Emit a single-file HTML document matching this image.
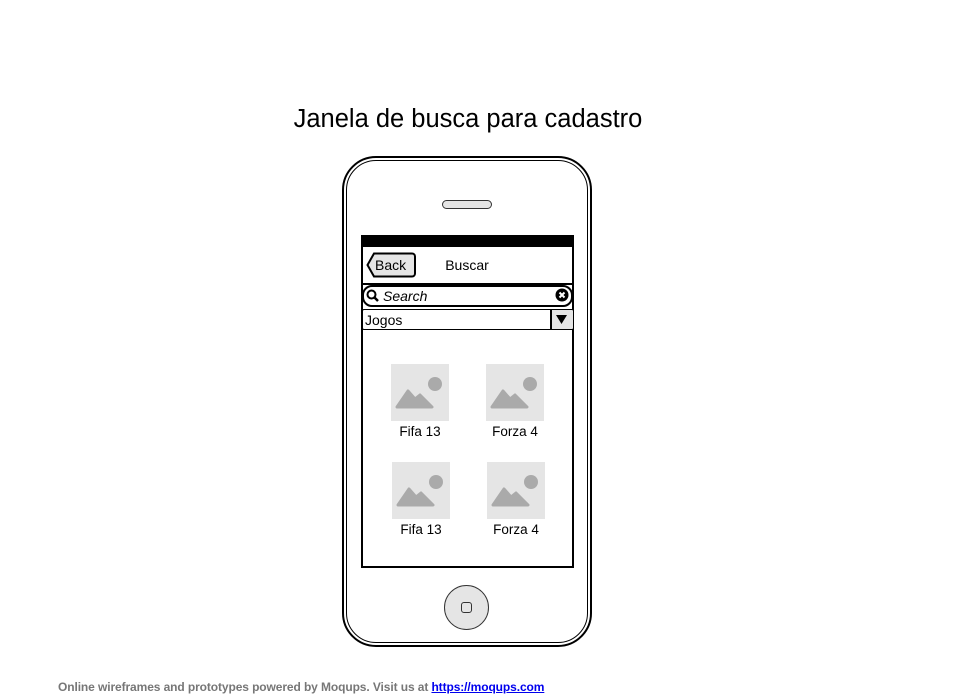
<!DOCTYPE html>
<html><head><meta charset="utf-8"><style>
body{margin:0;width:960px;height:700px;background:#fff;position:relative;font-family:"Liberation Sans",sans-serif;overflow:hidden}
.a{position:absolute}
.img{position:absolute;width:58px;height:57px;background:#e5e5e5}
.lbl{position:absolute;width:80px;text-align:center;font-size:13.5px;color:#000}
</style></head><body>
<div class="a" style="left:0;width:936px;top:105px;text-align:center;font-size:25.5px">Janela de busca para cadastro</div>
<div class="a" style="left:342px;top:156px;width:246px;height:487px;border:2px solid #000;border-radius:34px"></div>
<div class="a" style="left:346px;top:160px;width:240px;height:481px;border:1px solid #000;border-radius:30px"></div>
<div class="a" style="left:442px;top:200px;width:48px;height:7px;border:1px solid #333;border-radius:5px;background:#e5e5e5"></div>
<div class="a" style="left:361px;top:235px;width:209px;height:331px;border:2px solid #000;border-top:none;background:#fff"></div>
<div class="a" style="left:361px;top:235px;width:213px;height:12px;background:#000"></div>
<div class="a" style="left:361px;top:283px;width:213px;height:2px;background:#000"></div>
<svg class="a" style="left:366px;top:252px" width="51" height="27"><path d="M8 1.5 H46 a3 3 0 0 1 3 3 V21.5 a3 3 0 0 1 -3 3 H8 L1.5 13 Z" fill="#e5e5e5" stroke="#000" stroke-width="2"/><text x="9" y="18" font-family="Liberation Sans" font-size="14">Back</text></svg>
<div class="a" style="left:427px;top:257px;width:80px;text-align:center;font-size:14px">Buscar</div>
<div class="a" style="left:362px;top:285px;width:207px;height:18px;border:2px solid #000;border-radius:10px;background:#fff"></div>
<svg class="a" style="left:366px;top:289px" width="14" height="14"><circle cx="5.5" cy="5.5" r="4" fill="none" stroke="#000" stroke-width="2"/><path d="M8.5 8.5 L12 12" stroke="#000" stroke-width="2.5"/></svg>
<div class="a" style="left:383px;top:288px;font-size:14px;font-style:italic">Search</div>
<svg class="a" style="left:555px;top:288px" width="14" height="14"><circle cx="7" cy="7" r="6.5" fill="#000"/><path d="M4.5 4.5 L9.5 9.5 M9.5 4.5 L4.5 9.5" stroke="#fff" stroke-width="2"/></svg>
<div class="a" style="left:362px;top:309px;width:209px;height:19px;border:1px solid #000;border-radius:2px;background:#fff"></div>
<div class="a" style="left:550px;top:309px;width:21px;height:19px;border:1px solid #000;border-left:2px solid #000;border-radius:0 2px 2px 0;background:#e5e5e5"></div>
<svg class="a" style="left:556px;top:315px" width="12" height="10"><path d="M0 0 H11 L5.5 9 Z" fill="#000"/></svg>
<div class="a" style="left:365px;top:312px;font-size:14px">Jogos</div>
<div class="img" style="left:391px;top:364px"></div>
<div class="img" style="left:486px;top:364px"></div>
<div class="img" style="left:392px;top:462px"></div>
<div class="img" style="left:487px;top:462px"></div>
<svg class="a" style="left:391px;top:364px" width="58" height="57"><path d="M6 43 L17 27 L24 35 L29 31 L41 43 Z" fill="#aaa" stroke="#aaa" stroke-width="3" stroke-linejoin="round"/><circle cx="44" cy="20" r="7" fill="#aaa"/></svg>
<svg class="a" style="left:486px;top:364px" width="58" height="57"><path d="M6 43 L17 27 L24 35 L29 31 L41 43 Z" fill="#aaa" stroke="#aaa" stroke-width="3" stroke-linejoin="round"/><circle cx="44" cy="20" r="7" fill="#aaa"/></svg>
<svg class="a" style="left:392px;top:462px" width="58" height="57"><path d="M6 43 L17 27 L24 35 L29 31 L41 43 Z" fill="#aaa" stroke="#aaa" stroke-width="3" stroke-linejoin="round"/><circle cx="44" cy="20" r="7" fill="#aaa"/></svg>
<svg class="a" style="left:487px;top:462px" width="58" height="57"><path d="M6 43 L17 27 L24 35 L29 31 L41 43 Z" fill="#aaa" stroke="#aaa" stroke-width="3" stroke-linejoin="round"/><circle cx="44" cy="20" r="7" fill="#aaa"/></svg>
<div class="lbl" style="left:380px;top:424px">Fifa 13</div>
<div class="lbl" style="left:475px;top:424px">Forza 4</div>
<div class="lbl" style="left:381px;top:522px">Fifa 13</div>
<div class="lbl" style="left:476px;top:522px">Forza 4</div>
<div class="a" style="left:444px;top:585px;width:43px;height:43px;border:1px solid #333;border-radius:50%;background:#e5e5e5"></div>
<div class="a" style="left:461px;top:602px;width:9px;height:9px;border:1px solid #333;border-radius:3px"></div>
<div class="a" style="left:58px;top:680px;font-size:12px;font-weight:bold;color:#777;letter-spacing:-0.1px">Online wireframes and prototypes powered by Moqups. Visit us at <span style="color:#00e;text-decoration:underline">https://moqups.com</span></div>
</body></html>
